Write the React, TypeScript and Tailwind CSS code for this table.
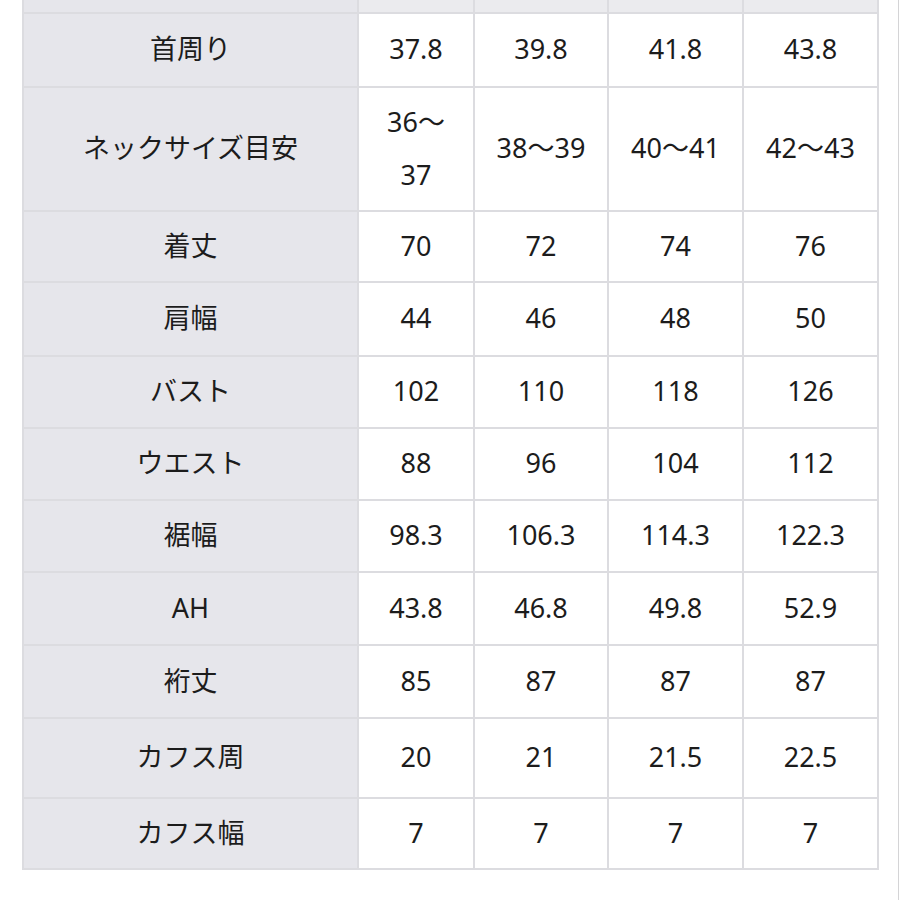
const rows: { label: string; values: React.ReactNode[]; h: string }[] = [
  { label: '首周り', values: ['37.8', '39.8', '41.8', '43.8'], h: 'h-[74px]' },
  {
    label: 'ネックサイズ目安',
    values: [
      <>
        36～
        <br />
        37
      </>,
      '38～39',
      '40～41',
      '42～43',
    ],
    h: 'h-[124px]',
  },
  { label: '着丈', values: ['70', '72', '74', '76'], h: 'h-[71px]' },
  { label: '肩幅', values: ['44', '46', '48', '50'], h: 'h-[74px]' },
  { label: 'バスト', values: ['102', '110', '118', '126'], h: 'h-[72px]' },
  { label: 'ウエスト', values: ['88', '96', '104', '112'], h: 'h-[72px]' },
  { label: '裾幅', values: ['98.3', '106.3', '114.3', '122.3'], h: 'h-[72px]' },
  { label: 'AH', values: ['43.8', '46.8', '49.8', '52.9'], h: 'h-[73px]' },
  { label: '裄丈', values: ['85', '87', '87', '87'], h: 'h-[73px]' },
  { label: 'カフス周', values: ['20', '21', '21.5', '22.5'], h: 'h-[80px]' },
  { label: 'カフス幅', values: ['7', '7', '7', '7'], h: 'h-[71px]' },
]

export default function App() {
  return (
    <div
      className="h-[900px] w-[899px] overflow-hidden border-r border-[#d4d4d6] bg-white"
      style={{ fontFamily: '"Noto Sans", "Noto Sans CJK JP", sans-serif' }}
    >
      <div className="-mt-[3px] pl-[22px]">
        <table className="w-[855px] table-fixed border-collapse text-[27px] leading-[53px] text-[#1c1c1c]">
          <colgroup>
            <col className="w-[335px]" />
            <col className="w-[116px]" />
            <col className="w-[134px]" />
            <col className="w-[135px]" />
            <col className="w-[135px]" />
          </colgroup>
          <tbody>
            {/* header row, scrolled out of view */}
            <tr className="h-[15px]">
              <td className="border-2 border-[#dcdce0] bg-[#e6e6eb]" />
              {[0, 1, 2, 3].map((i) => (
                <td key={i} className="border-2 border-[#dcdce0] bg-[#ebebee]" />
              ))}
            </tr>
            {rows.map((row) => (
              <tr key={row.label} className={row.h}>
                <td className="border-2 border-[#dcdce0] bg-[#e6e6eb] pb-[3px] text-center align-middle">
                  {row.label}
                </td>
                {row.values.map((v, i) => (
                  <td
                    key={i}
                    className="border-2 border-[#dcdce0] bg-white px-2 pb-[3px] text-center align-middle"
                  >
                    {v}
                  </td>
                ))}
              </tr>
            ))}
          </tbody>
        </table>
      </div>
    </div>
  )
}
